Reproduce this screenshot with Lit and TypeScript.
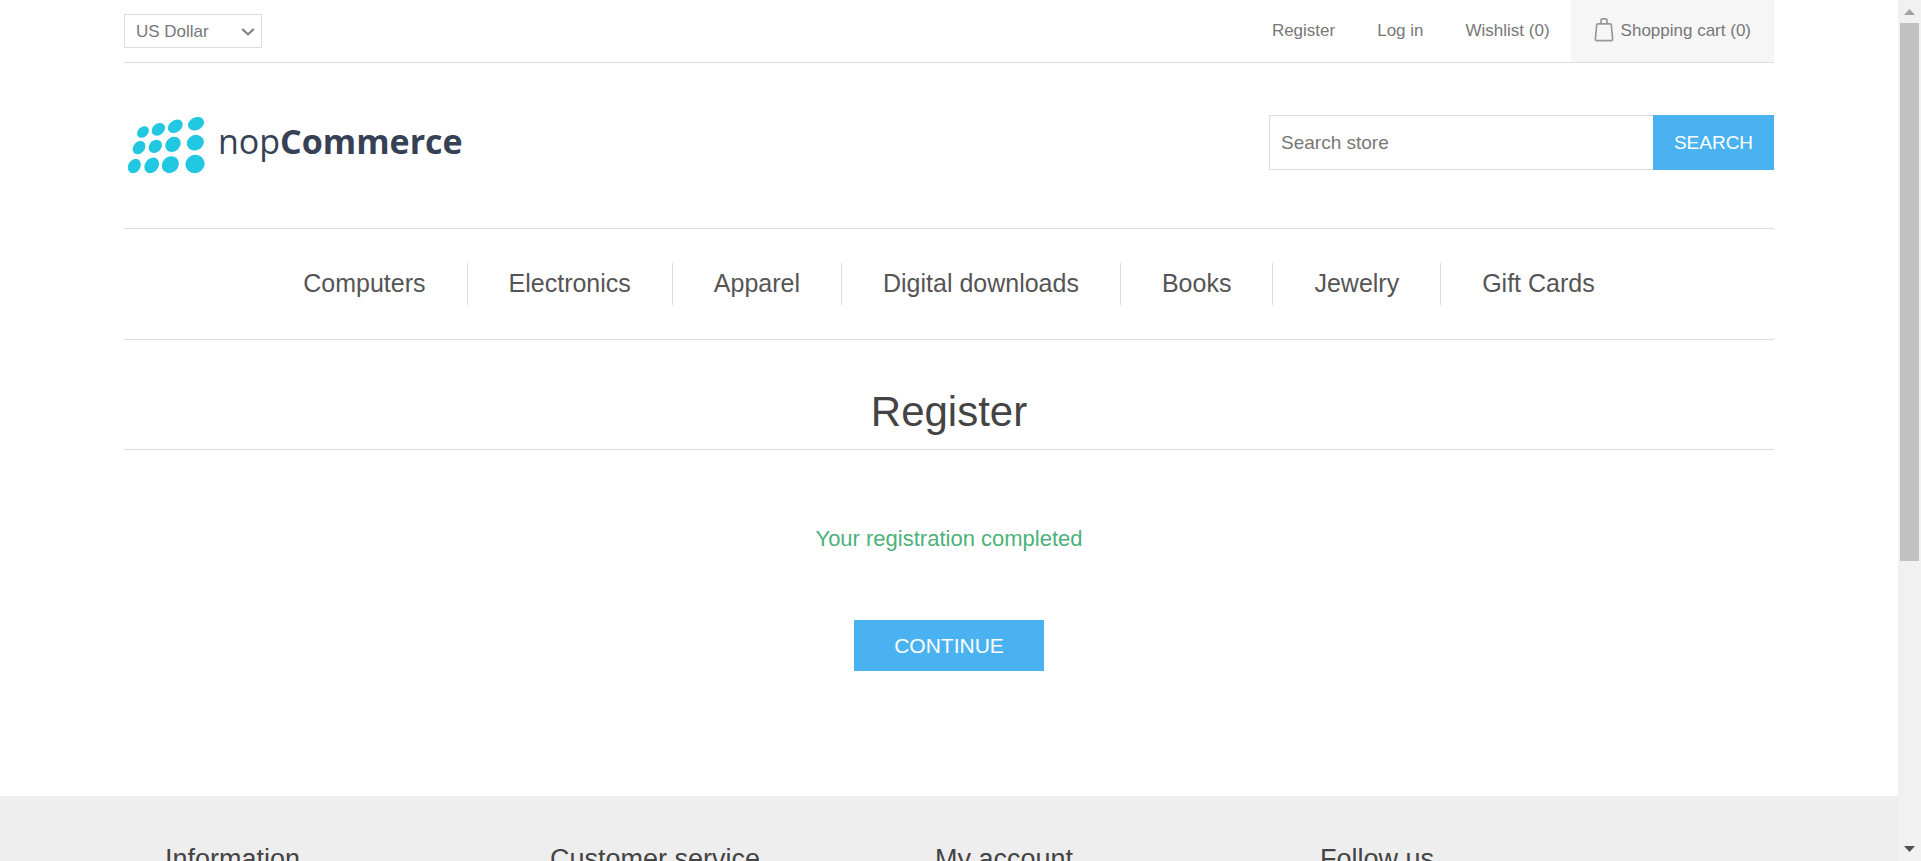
import { LitElement, html, css, svg } from "lit";
import { customElement } from "lit/decorators.js";

// Logo dots: centre x, centre y, radius x, radius y, tilt
const DOTS = [
  [57, 66, 20, 15, -43], [103, 58, 22, 17, -40], [154, 49, 24, 18, -35], [216, 41, 25, 19, -25],
  [45, 113, 22, 17, -50], [94, 109, 22, 18, -45], [147, 103, 25, 21, -40], [214, 98, 26, 23, -25],
  [31, 168, 23, 18, -58], [83, 166, 25, 20, -52], [139, 164, 27, 24, -45], [213, 162, 29, 27, -25],
];

const CATEGORIES = ["Computers", "Electronics", "Apparel", "Digital downloads", "Books", "Jewelry", "Gift Cards"];
const FOOTER = ["Information", "Customer service", "My account", "Follow us"];

@customElement("app-root")
export class AppRoot extends LitElement {
  static styles = css`
    :host {
      display: flex;
      height: 100vh;
      overflow: hidden;
      background: #fff;
      color: #777;
      font-family: "Liberation Sans", Arial, sans-serif;
      font-size: 17px;
    }
    * { box-sizing: border-box; }
    a { color: inherit; text-decoration: none; }
    button, input, select { font-family: inherit; border-radius: 0; margin: 0; }
    button { border: 0; background: #4ab2f1; color: #fff; text-transform: uppercase; cursor: pointer; }
    .page { flex: 1; min-width: 0; display: flex; flex-direction: column; overflow: hidden; }
    .wrap { width: 100%; max-width: 1650px; margin: 0 auto; flex: none; }

    .topbar { display: flex; align-items: center; justify-content: space-between; border-bottom: 1px solid #ddd; }
    .currency { position: relative; }
    .currency select {
      appearance: none;
      display: block;
      width: 138px;
      height: 34px;
      padding: 0 11px;
      border: 1px solid #ddd;
      background: #fff;
      color: #777;
      font-size: 17px;
    }
    .chevron { position: absolute; right: 7px; top: 14px; pointer-events: none; }
    .links { display: flex; align-items: center; gap: 42px; line-height: 62px; }
    .cart { display: flex; align-items: center; gap: 7px; margin-left: -21px; padding: 0 23px; background: #f6f6f6; }
    .cart svg { margin-bottom: 4px; }

    .header { display: flex; align-items: flex-start; justify-content: space-between; padding: 52px 0 53px; border-bottom: 1px solid #ddd; }
    .logo { display: flex; align-items: flex-start; gap: 12px; color: #364156; font: 400 34px/52px "Open Sans", sans-serif; }
    .logo svg { display: block; }
    .logo b { font-weight: 700; }
    .search { display: flex; height: 55px; }
    .search input { width: 384px; padding: 0 11px; border: 1px solid #ddd; border-right: 0; color: #777; font-size: 19px; outline: 0; }
    .search input::placeholder { color: #777; opacity: 1; }
    .search button { width: 121px; padding: 0; font-size: 19px; }

    .menu { display: flex; justify-content: center; padding: 34px 0; border-bottom: 1px solid #ddd; color: #555; font-size: 25px; line-height: 40px; }
    .menu a { padding: 0 41px 2px; }
    .menu a + a { border-left: 1px solid #ddd; }

    .content { text-align: center; padding-bottom: 125px; }
    h1 { margin: 0; padding: 48px 0 13px; border-bottom: 1px solid #ddd; color: #444; font-size: 42px; font-weight: 400; line-height: 48px; }
    .result { padding: 76px 0 68px; color: #4cb17c; font-size: 22px; line-height: 26px; }
    .continue { display: block; width: 190px; height: 51px; margin: 0 auto; padding: 0; font-size: 21px; }

    .footer { flex: 1 0 auto; background: #eee; }
    .columns { display: grid; grid-template-columns: repeat(4, 1fr); padding: 47px 69px 0 41px; }
    h2 { margin: 0; color: #444; font-size: 27px; font-weight: 400; line-height: 32px; }

    .scrollbar { width: 23px; flex: none; display: flex; flex-direction: column; align-items: center; background: #f1f1f1; }
    .arrow { width: 23px; height: 23px; flex: none; display: block; }
    .track { flex: 1; width: 19px; }
    .thumb { height: 66%; background: #c1c1c1; }
  `;

  render() {
    return html`
      <div class="page">
        <div class="wrap topbar">
          <div class="currency">
            <select aria-label="Currency"><option>US Dollar</option></select>
            <svg class="chevron" width="14" height="8" viewBox="0 0 14 8"><path d="M1.3 1 L7 6.4 L12.7 1" fill="none" stroke="#777" stroke-width="2" /></svg>
          </div>
          <nav class="links" aria-label="Account">
            <a href="#">Register</a>
            <a href="#">Log in</a>
            <a href="#">Wishlist (0)</a>
            <a href="#" class="cart">
              <svg width="20" height="25" viewBox="0 0 20 25" fill="none" stroke="#999" stroke-width="1.7">
                <path d="M4 6.8 H16 Q17.2 6.8 17.3 8 L18.6 21.8 Q18.8 23.6 17 23.6 H3 Q1.2 23.6 1.4 21.8 L2.7 8 Q2.8 6.8 4 6.8 Z" />
                <path d="M7 6.6 V3.4 Q7 1.8 8.6 1.8 H11.4 Q13 1.8 13 3.4 V6.6" />
              </svg>
              <span>Shopping cart (0)</span>
            </a>
          </nav>
        </div>
        <header class="wrap header">
          <a href="#" class="logo" aria-label="nopCommerce">
            <svg width="82" height="60" viewBox="0 15 246 180" fill="#22c8e1">
              ${DOTS.map(([x, y, rx, ry, a]) => svg`<ellipse cx=${x} cy=${y} rx=${rx} ry=${ry} transform="rotate(${a} ${x} ${y})" />`)}
            </svg>
            <span>nop<b>Commerce</b></span>
          </a>
          <form class="search" @submit=${(e: Event) => e.preventDefault()}>
            <input type="text" placeholder="Search store" aria-label="Search store" />
            <button type="submit">Search</button>
          </form>
        </header>
        <nav class="wrap menu" aria-label="Categories">
          ${CATEGORIES.map((c) => html`<a href="#">${c}</a>`)}
        </nav>
        <main class="wrap content">
          <h1>Register</h1>
          <div class="result">Your registration completed</div>
          <button type="button" class="continue">Continue</button>
        </main>
        <footer class="footer">
          <div class="wrap columns">${FOOTER.map((f) => html`<h2>${f}</h2>`)}</div>
        </footer>
      </div>
      <div class="scrollbar" aria-hidden="true">
        <svg class="arrow" viewBox="0 0 23 23"><path d="M6 15 L11.5 9 L17 15 Z" fill="#a3a3a3" /></svg>
        <div class="track"><div class="thumb"></div></div>
        <svg class="arrow" viewBox="0 0 23 23"><path d="M6 8 L11.5 14 L17 8 Z" fill="#505050" /></svg>
      </div>
    `;
  }
}
